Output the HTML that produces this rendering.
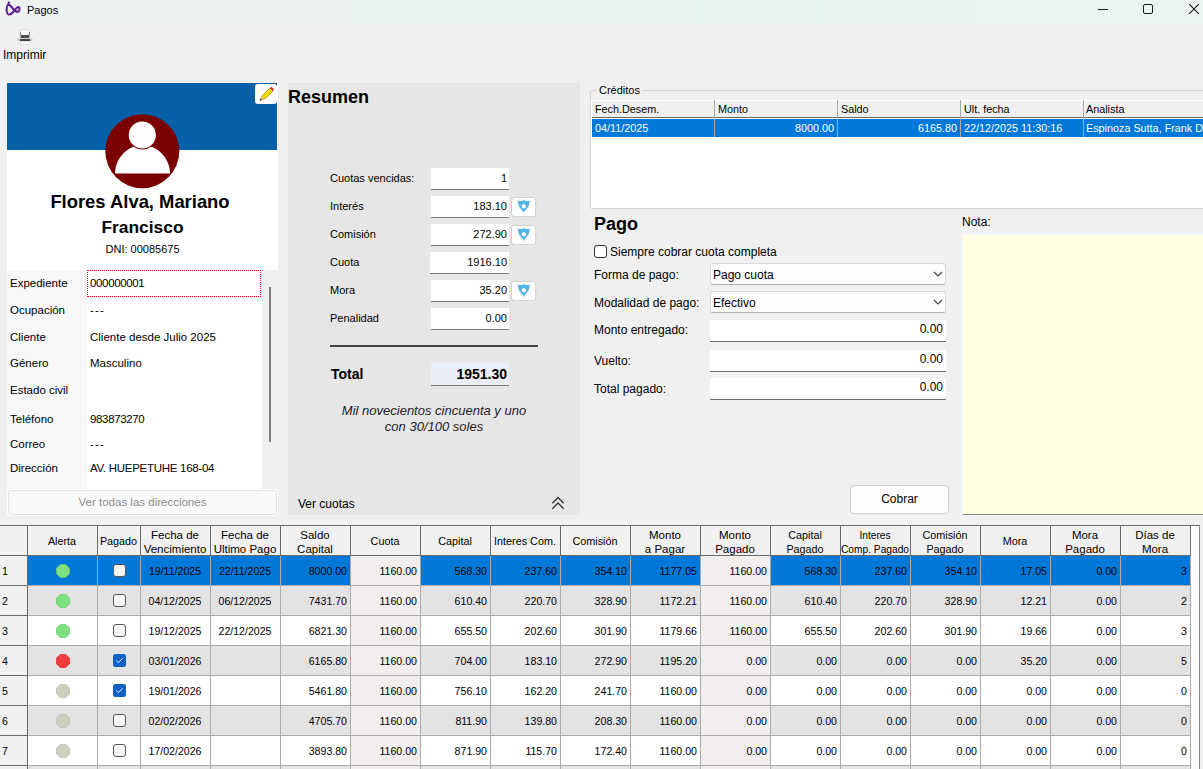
<!DOCTYPE html>
<html><head><meta charset="utf-8">
<style>
*{box-sizing:border-box;margin:0;padding:0}
html,body{width:1203px;height:769px;overflow:hidden;background:#f0f0f0;font-family:"Liberation Sans",sans-serif;color:#000}
.a{position:absolute}
.t{position:absolute;white-space:nowrap;line-height:1}
#title{left:0;top:0;width:1203px;height:25px;background:linear-gradient(90deg,#eef2f1 0%,#eaf3ef 45%,#e8f4ee 62%,#ecf4f2 100%)}
/* left card */
#card{left:7px;top:83px;width:271px;height:187px;background:#fff}
#blue{left:7px;top:83px;width:270px;height:67px;background:#0560a8}
#lblcol{left:7px;top:270px;width:80px;height:219px;background:#f7f7f7}
#lpbg{left:7px;top:270px;width:271px;height:245px;background:#f6f6f6}
#valcol{left:87px;top:270px;width:175px;height:219px;background:#fff}
.lab{font-size:11.5px;color:#000}
/* resumen */
#res{left:288px;top:83px;width:292px;height:432px;background:#e6e6e6}
.rl{font-size:11px;color:#000}
.tb{position:absolute;background:#fff;border-bottom:1px solid #7a7a7a;font-size:11px;text-align:right;padding-right:2px;line-height:20px}
.sh{position:absolute;width:24px;height:21px;background:#fff;border:1px solid #d4d4d4;border-radius:3px}

.cr{font-size:10.8px;color:#000}
.w{color:#fff}
.pl{font-size:12px;color:#000}
.cb{position:absolute;width:236px;height:22px;background:#fdfdfd;border:1px solid #d9d9d9;border-bottom-color:#b0b0b0;border-radius:3px}
.ptb{position:absolute;width:236px;height:22px;background:#fff;border-bottom:1px solid #6f6f6f;font-size:12px;text-align:right;padding-right:3px;line-height:19px}
.gc{font-size:10.6px;color:#000}
.gh{font-size:10.8px;color:#000}
</style></head><body>
<div id="title" class="a"></div>
<svg class="a" style="left:0;top:0" width="24" height="20" viewBox="0 0 24 20">
<path d="M8.4 4.2 C6.2 5.8 6 12.2 7.8 14 C9.6 15.6 12 13.4 14 11 C15.8 8.6 17.6 6.4 18.8 7 C20 7.8 19.6 11.2 17.8 11.8 C16.2 12.3 14.2 10.2 12.4 8 C11.2 6.5 10 5 8.4 4.2 Z" fill="none" stroke="#5b2290" stroke-width="2.1" stroke-linejoin="round"/>
<circle cx="8.8" cy="2.6" r="1.1" fill="#3b1566"/>
</svg>
<div class="t" style="left:27px;top:5px;font-size:11px">Pagos</div>
<!-- window controls -->
<div class="a" style="left:1098px;top:9px;width:10px;height:1px;background:#1a1a1a"></div>
<div class="a" style="left:1143px;top:4px;width:10px;height:10px;border:1px solid #1a1a1a;border-radius:2px"></div>
<svg class="a" style="left:1189px;top:4px" width="10" height="10" viewBox="0 0 10 10"><path d="M0 0L10 10M10 0L0 10" stroke="#1a1a1a" stroke-width="1.1"/></svg>

<!-- toolbar -->
<svg class="a" style="left:16px;top:29px" width="18" height="17" viewBox="0 0 18 17">
<rect x="4.8" y="0.9" width="8.4" height="5" fill="#fbfbfb" stroke="#d0d0d0" stroke-width="0.6"/>
<rect x="4.2" y="3" width="0.8" height="3" fill="#777"/><rect x="13" y="3" width="0.8" height="3" fill="#777"/>
<rect x="4.6" y="6.2" width="8.8" height="2.6" fill="#3d3d3d"/>
<rect x="1.2" y="9" width="15.4" height="3.2" rx="1.6" fill="#c9c9c9"/>
<rect x="4" y="10.2" width="10" height="1.8" fill="#2e2e2e"/>
<rect x="4.9" y="12.2" width="8.2" height="3.1" fill="#fdfdfd" stroke="#cfcfcf" stroke-width="0.6"/>
</svg>
<div class="t" style="left:3px;top:49px;font-size:12px">Imprimir</div>

<!-- LEFT PANEL -->
<div id="card" class="a"></div>
<div id="blue" class="a"></div>
<div class="a" style="left:255px;top:84px;width:22px;height:20px;background:#fff;border-radius:3px"></div>
<svg class="a" style="left:257px;top:86px" width="18" height="16" viewBox="0 0 18 16">
<path d="M3 14 L5 10 L13 2 L16 5 L8 13 Z" fill="#f0e000" stroke="#8a6d00" stroke-width="0.6"/>
<path d="M13 2 L14.5 0.8 L17 3.5 L16 5 Z" fill="#e8202a"/>
<path d="M3 14 L5 10 L8 13 Z" fill="#e7b98a"/>
<path d="M2.5 15 L3.5 12.5 L5 14 Z" fill="#333"/>
</svg>
<svg class="a" style="left:105px;top:114px" width="75" height="75" viewBox="0 0 75 75">
<circle cx="37.3" cy="37.2" r="37" fill="#7b0000"/>
<path d="M10 59.5 C10 45 22 31 37.5 31 C53 31 65 45 65 59.5 Z" fill="#fff"/>
<circle cx="37.3" cy="21" r="14.5" fill="#7b0000"/>
<circle cx="37.3" cy="21" r="13.6" fill="#fff"/>
</svg>
<div class="t" style="left:7px;width:271px;text-align:center;top:189px;font-size:18.4px;font-weight:bold;line-height:25px"><span style="padding-right:5px">Flores Alva, Mariano</span></div>
<div class="t" style="left:7px;width:271px;text-align:center;top:214.5px;font-size:17.4px;font-weight:bold;line-height:25px">Francisco</div>
<div class="t" style="left:7px;width:271px;text-align:center;top:244px;font-size:11px">DNI: 00085675</div>

<div id="lpbg" class="a"></div>
<div class="a" style="left:262px;top:270px;width:16px;height:219px;background:#efefef"></div>
<div id="lblcol" class="a"></div>
<div id="valcol" class="a"></div>
<div class="a" style="left:87px;top:270px;width:174px;height:27px;border:1px dotted #ff0000"></div>
<div class="a" style="left:269px;top:287px;width:2px;height:155px;background:#808080"></div>

<div class="t lab" style="left:10px;top:278px">Expediente</div>
<div class="t lab" style="left:10px;top:305px">Ocupación</div>
<div class="t lab" style="left:10px;top:332px">Cliente</div>
<div class="t lab" style="left:10px;top:358px">Género</div>
<div class="t lab" style="left:10px;top:385px">Estado civil</div>
<div class="t lab" style="left:10px;top:414px">Teléfono</div>
<div class="t lab" style="left:10px;top:439px">Correo</div>
<div class="t lab" style="left:10px;top:463px">Dirección</div>

<div class="t lab" style="left:90px;top:278px;letter-spacing:-0.35px">000000001</div>
<div class="t lab" style="left:90px;top:305px;letter-spacing:1.2px">---</div>
<div class="t lab" style="left:90px;top:332px">Cliente desde Julio 2025</div>
<div class="t lab" style="left:90px;top:358px">Masculino</div>
<div class="t lab" style="left:90px;top:414px;letter-spacing:-0.35px">983873270</div>
<div class="t lab" style="left:90px;top:439px;letter-spacing:1.2px">---</div>
<div class="t lab" style="left:90px;top:463px;letter-spacing:-0.28px">AV. HUEPETUHE 168-04</div>

<div class="a" style="left:8px;top:490px;width:269px;height:25px;background:#f9f9f9;border:1px solid #e2e2e2;border-radius:3px;box-shadow:0 0 0 1px #fff"></div>
<div class="t" style="left:8px;width:269px;text-align:center;top:497px;font-size:11.5px;color:#8d8d8d">Ver todas las direcciones</div>

<!-- RESUMEN -->
<div id="res" class="a"></div>
<div class="t" style="left:288px;top:88px;font-size:18px;font-weight:bold">Resumen</div>

<div class="t rl" style="left:330px;top:173px">Cuotas vencidas:</div>
<div class="t rl" style="left:330px;top:201px">Interés</div>
<div class="t rl" style="left:330px;top:229px">Comisión</div>
<div class="t rl" style="left:330px;top:257px">Cuota</div>
<div class="t rl" style="left:330px;top:285px">Mora</div>
<div class="t rl" style="left:330px;top:313px">Penalidad</div>

<div class="tb" style="left:431px;top:168px;width:78px;height:22px">1</div>
<div class="tb" style="left:431px;top:196px;width:78px;height:22px">183.10</div>
<div class="tb" style="left:431px;top:224px;width:78px;height:22px">272.90</div>
<div class="tb" style="left:430px;top:252px;width:79px;height:22px">1916.10</div>
<div class="tb" style="left:431px;top:280px;width:78px;height:22px">35.20</div>
<div class="tb" style="left:431px;top:308px;width:78px;height:22px">0.00</div>

<svg class="a" style="left:511px;top:197px" width="26" height="20" viewBox="0 0 26 20"><rect x="0.5" y="0.5" width="24.2" height="19.2" rx="3" fill="#fff" stroke="#cdcdcd"/><g transform="translate(0.8,0)"><path d="M5.5 3.2 L18.5 3.2 C18.5 8.5 15.5 13 12 16.3 C8.5 13 5.5 8.5 5.5 3.2 Z" fill="none" stroke="#bbb" stroke-width="0.6" stroke-dasharray="1 1"/><path d="M6.2 4 L10.8 4 L12 2.8 L13.2 4 L17.8 4 C17.8 8.5 15 12.2 12 15.3 C9 12.2 6.2 8.5 6.2 4 Z" fill="#50b6e8"/><path d="M12 6.8 L14.3 8.5 L13.5 11.2 L10.5 11.2 L9.7 8.5 Z" fill="#fff"/></g></svg>
<svg class="a" style="left:511px;top:225px" width="26" height="20" viewBox="0 0 26 20"><rect x="0.5" y="0.5" width="24.2" height="19.2" rx="3" fill="#fff" stroke="#cdcdcd"/><g transform="translate(0.8,0)"><path d="M5.5 3.2 L18.5 3.2 C18.5 8.5 15.5 13 12 16.3 C8.5 13 5.5 8.5 5.5 3.2 Z" fill="none" stroke="#bbb" stroke-width="0.6" stroke-dasharray="1 1"/><path d="M6.2 4 L10.8 4 L12 2.8 L13.2 4 L17.8 4 C17.8 8.5 15 12.2 12 15.3 C9 12.2 6.2 8.5 6.2 4 Z" fill="#50b6e8"/><path d="M12 6.8 L14.3 8.5 L13.5 11.2 L10.5 11.2 L9.7 8.5 Z" fill="#fff"/></g></svg>
<svg class="a" style="left:511px;top:281px" width="26" height="20" viewBox="0 0 26 20"><rect x="0.5" y="0.5" width="24.2" height="19.2" rx="3" fill="#fff" stroke="#cdcdcd"/><g transform="translate(0.8,0)"><path d="M5.5 3.2 L18.5 3.2 C18.5 8.5 15.5 13 12 16.3 C8.5 13 5.5 8.5 5.5 3.2 Z" fill="none" stroke="#bbb" stroke-width="0.6" stroke-dasharray="1 1"/><path d="M6.2 4 L10.8 4 L12 2.8 L13.2 4 L17.8 4 C17.8 8.5 15 12.2 12 15.3 C9 12.2 6.2 8.5 6.2 4 Z" fill="#50b6e8"/><path d="M12 6.8 L14.3 8.5 L13.5 11.2 L10.5 11.2 L9.7 8.5 Z" fill="#fff"/></g></svg>

<div class="a" style="left:330px;top:345px;width:208px;height:2px;background:#454545"></div>
<div class="t" style="left:331px;top:367px;font-size:14px;font-weight:bold">Total</div>
<div class="tb" style="left:431px;top:363px;width:78px;height:23px;background:#e9eef9;font-size:14px;font-weight:bold;line-height:22px">1951.30</div>

<div class="t" style="left:288px;width:292px;text-align:center;top:403px;font-size:13px;font-style:italic;line-height:16px;color:#222">Mil novecientos cincuenta y uno<br>con 30/100 soles</div>
<div class="t" style="left:298px;top:498px;font-size:12px">Ver cuotas</div>
<svg class="a" style="left:551px;top:496px" width="14" height="14" viewBox="0 0 14 14"><path d="M1.3 7.2 L7 1.5 L12.7 7.2 M1.3 12.7 L7 7 L12.7 12.7" fill="none" stroke="#333" stroke-width="1.3"/></svg>


<!-- CREDITOS -->
<div class="a" style="left:590px;top:90px;width:620px;height:119px;border:1px solid #d6d6d6;border-radius:2px"></div>
<div class="t" style="left:597px;top:85px;padding:0 2px;background:#f0f0f0;font-size:11px">Créditos</div>
<div class="a" style="left:591px;top:100px;width:612px;height:108px;background:#fff"></div>
<div class="a" style="left:592px;top:100px;width:611px;height:18px;background:#f0f0f0;border-top:1px solid #fff;border-bottom:1px solid #6d6d6d"></div>
<div class="a" style="left:714px;top:100px;width:1px;height:37px;background:#a9a9a9"></div>
<div class="a" style="left:837px;top:100px;width:1px;height:37px;background:#a9a9a9"></div>
<div class="a" style="left:960px;top:100px;width:1px;height:37px;background:#a9a9a9"></div>
<div class="a" style="left:1083px;top:100px;width:1px;height:37px;background:#a9a9a9"></div>
<div class="t cr" style="left:595px;top:104px">Fech.Desem.</div>
<div class="t cr" style="left:718px;top:104px">Monto</div>
<div class="t cr" style="left:841px;top:104px">Saldo</div>
<div class="t cr" style="left:964px;top:104px">Ult. fecha</div>
<div class="t cr" style="left:1086px;top:104px">Analista</div>
<div class="a" style="left:592px;top:119px;width:611px;height:18px;background:#0078d7"></div>
<div class="a" style="left:714px;top:119px;width:1px;height:18px;background:#a9a9a9"></div>
<div class="a" style="left:837px;top:119px;width:1px;height:18px;background:#a9a9a9"></div>
<div class="a" style="left:960px;top:119px;width:1px;height:18px;background:#a9a9a9"></div>
<div class="a" style="left:1083px;top:119px;width:1px;height:18px;background:#a9a9a9"></div>
<div class="t cr w" style="left:595px;top:123px">04/11/2025</div>
<div class="t cr w" style="left:714px;width:120px;text-align:right;top:123px">8000.00</div>
<div class="t cr w" style="left:837px;width:120px;text-align:right;top:123px">6165.80</div>
<div class="t cr w" style="left:964px;top:123px">22/12/2025 11:30:16</div>
<div class="t cr w" style="left:1086px;top:123px">Espinoza Sutta, Frank D</div>

<!-- PAGO -->
<div class="t" style="left:594px;top:215px;font-size:18px;font-weight:bold">Pago</div>
<div class="a" style="left:594px;top:245px;width:13px;height:13px;border:1px solid #333;border-radius:3px;background:#fff"></div>
<div class="t pl" style="left:610px;top:246px">Siempre cobrar cuota completa</div>
<div class="t pl" style="left:594px;top:269px">Forma de pago:</div>
<div class="t pl" style="left:594px;top:297px">Modalidad de pago:</div>
<div class="t pl" style="left:594px;top:324px">Monto entregado:</div>
<div class="t pl" style="left:594px;top:355px">Vuelto:</div>
<div class="t pl" style="left:594px;top:383px">Total pagado:</div>
<div class="cb" style="left:710px;top:263px"></div>
<div class="cb" style="left:710px;top:291px"></div>
<div class="t pl" style="left:713px;top:269px">Pago cuota</div>
<div class="t pl" style="left:713px;top:297px">Efectivo</div>
<svg class="a" style="left:933px;top:271px" width="10" height="6" viewBox="0 0 10 6"><path d="M1 1L5 5L9 1" fill="none" stroke="#444" stroke-width="1.1"/></svg>
<svg class="a" style="left:933px;top:299px" width="10" height="6" viewBox="0 0 10 6"><path d="M1 1L5 5L9 1" fill="none" stroke="#444" stroke-width="1.1"/></svg>
<div class="ptb" style="left:710px;top:320px">0.00</div>
<div class="ptb" style="left:710px;top:350px">0.00</div>
<div class="ptb" style="left:710px;top:378px">0.00</div>

<div class="a" style="left:850px;top:485px;width:99px;height:29px;background:#fdfdfd;border:1px solid #d0d0d0;border-radius:4px"></div>
<div class="t pl" style="left:850px;width:99px;text-align:center;top:493px">Cobrar</div>

<!-- NOTA -->
<div class="t pl" style="left:962px;top:216px">Nota:</div>
<div class="a" style="left:962px;top:234px;width:241px;height:281px;background:#fffde2;border-top:1px solid #f7f7f7;border-left:1px solid #f7f7f7;border-bottom:1px solid #8a8a8a"></div>
<!-- GRID -->
<div class="a" style="left:0;top:525px;width:1200px;height:244px;background:#fff;border-top:1px solid #6a6a6a;border-right:1px solid #8a8a8a"></div>
<div class="a" style="left:0;top:526px;width:1190px;height:29px;background:#f0f0f0"></div>
<div class="a" style="left:0;top:555px;width:27px;height:214px;background:#f0f0f0"></div>
<div class="a" style="left:28px;top:556px;width:1162px;height:29px;background:#0078d7"></div>
<div class="a" style="left:351px;top:556px;width:69px;height:29px;background:#f3eeee"></div>
<div class="a" style="left:701px;top:556px;width:69px;height:29px;background:#f3eeee"></div>
<div class="a" style="left:28px;top:585px;width:1162px;height:1px;background:#ababab"></div>
<div class="a" style="left:0;top:585px;width:27px;height:1px;background:#6a6a6a"></div>
<div class="t gc" style="left:2px;top:566px">1</div>
<svg class="a" style="left:56px;top:564px" width="14" height="14" viewBox="0 0 14 14"><path d="M4.3 0.4H9.7L13.6 4.3V9.7L9.7 13.6H4.3L0.4 9.7V4.3Z" fill="#7fe07f" stroke="#6cc86c" stroke-width="0.8"/></svg>
<div class="a" style="left:113px;top:564px;width:13px;height:13px;background:#f7f7f7;border:1px solid #555;border-radius:3px"></div>
<div class="t gc" style="left:140px;width:70px;text-align:center;top:566px">19/11/2025</div>
<div class="t gc" style="left:210px;width:70px;text-align:center;top:566px">22/11/2025</div>
<div class="t gc" style="left:280px;width:67px;text-align:right;top:566px">8000.00</div>
<div class="t gc" style="left:350px;width:67px;text-align:right;top:566px">1160.00</div>
<div class="t gc" style="left:420px;width:67px;text-align:right;top:566px">568.30</div>
<div class="t gc" style="left:490px;width:67px;text-align:right;top:566px">237.60</div>
<div class="t gc" style="left:560px;width:67px;text-align:right;top:566px">354.10</div>
<div class="t gc" style="left:630px;width:67px;text-align:right;top:566px">1177.05</div>
<div class="t gc" style="left:700px;width:67px;text-align:right;top:566px">1160.00</div>
<div class="t gc" style="left:770px;width:67px;text-align:right;top:566px">568.30</div>
<div class="t gc" style="left:840px;width:67px;text-align:right;top:566px">237.60</div>
<div class="t gc" style="left:910px;width:67px;text-align:right;top:566px">354.10</div>
<div class="t gc" style="left:980px;width:67px;text-align:right;top:566px">17.05</div>
<div class="t gc" style="left:1050px;width:67px;text-align:right;top:566px">0.00</div>
<div class="t gc" style="left:1120px;width:67px;text-align:right;top:566px">3</div>
<div class="a" style="left:28px;top:586px;width:1162px;height:29px;background:#e3e3e3"></div>
<div class="a" style="left:351px;top:586px;width:69px;height:29px;background:#f3eeee"></div>
<div class="a" style="left:701px;top:586px;width:69px;height:29px;background:#f3eeee"></div>
<div class="a" style="left:28px;top:615px;width:1162px;height:1px;background:#ababab"></div>
<div class="a" style="left:0;top:615px;width:27px;height:1px;background:#6a6a6a"></div>
<div class="t gc" style="left:2px;top:596px">2</div>
<svg class="a" style="left:56px;top:594px" width="14" height="14" viewBox="0 0 14 14"><path d="M4.3 0.4H9.7L13.6 4.3V9.7L9.7 13.6H4.3L0.4 9.7V4.3Z" fill="#7fe07f" stroke="#6cc86c" stroke-width="0.8"/></svg>
<div class="a" style="left:113px;top:594px;width:13px;height:13px;background:#f7f7f7;border:1px solid #555;border-radius:3px"></div>
<div class="t gc" style="left:140px;width:70px;text-align:center;top:596px">04/12/2025</div>
<div class="t gc" style="left:210px;width:70px;text-align:center;top:596px">06/12/2025</div>
<div class="t gc" style="left:280px;width:67px;text-align:right;top:596px">7431.70</div>
<div class="t gc" style="left:350px;width:67px;text-align:right;top:596px">1160.00</div>
<div class="t gc" style="left:420px;width:67px;text-align:right;top:596px">610.40</div>
<div class="t gc" style="left:490px;width:67px;text-align:right;top:596px">220.70</div>
<div class="t gc" style="left:560px;width:67px;text-align:right;top:596px">328.90</div>
<div class="t gc" style="left:630px;width:67px;text-align:right;top:596px">1172.21</div>
<div class="t gc" style="left:700px;width:67px;text-align:right;top:596px">1160.00</div>
<div class="t gc" style="left:770px;width:67px;text-align:right;top:596px">610.40</div>
<div class="t gc" style="left:840px;width:67px;text-align:right;top:596px">220.70</div>
<div class="t gc" style="left:910px;width:67px;text-align:right;top:596px">328.90</div>
<div class="t gc" style="left:980px;width:67px;text-align:right;top:596px">12.21</div>
<div class="t gc" style="left:1050px;width:67px;text-align:right;top:596px">0.00</div>
<div class="t gc" style="left:1120px;width:67px;text-align:right;top:596px">2</div>
<div class="a" style="left:28px;top:616px;width:1162px;height:29px;background:#ffffff"></div>
<div class="a" style="left:351px;top:616px;width:69px;height:29px;background:#f3eeee"></div>
<div class="a" style="left:701px;top:616px;width:69px;height:29px;background:#f3eeee"></div>
<div class="a" style="left:28px;top:645px;width:1162px;height:1px;background:#ababab"></div>
<div class="a" style="left:0;top:645px;width:27px;height:1px;background:#6a6a6a"></div>
<div class="t gc" style="left:2px;top:626px">3</div>
<svg class="a" style="left:56px;top:624px" width="14" height="14" viewBox="0 0 14 14"><path d="M4.3 0.4H9.7L13.6 4.3V9.7L9.7 13.6H4.3L0.4 9.7V4.3Z" fill="#7fe07f" stroke="#6cc86c" stroke-width="0.8"/></svg>
<div class="a" style="left:113px;top:624px;width:13px;height:13px;background:#f7f7f7;border:1px solid #555;border-radius:3px"></div>
<div class="t gc" style="left:140px;width:70px;text-align:center;top:626px">19/12/2025</div>
<div class="t gc" style="left:210px;width:70px;text-align:center;top:626px">22/12/2025</div>
<div class="t gc" style="left:280px;width:67px;text-align:right;top:626px">6821.30</div>
<div class="t gc" style="left:350px;width:67px;text-align:right;top:626px">1160.00</div>
<div class="t gc" style="left:420px;width:67px;text-align:right;top:626px">655.50</div>
<div class="t gc" style="left:490px;width:67px;text-align:right;top:626px">202.60</div>
<div class="t gc" style="left:560px;width:67px;text-align:right;top:626px">301.90</div>
<div class="t gc" style="left:630px;width:67px;text-align:right;top:626px">1179.66</div>
<div class="t gc" style="left:700px;width:67px;text-align:right;top:626px">1160.00</div>
<div class="t gc" style="left:770px;width:67px;text-align:right;top:626px">655.50</div>
<div class="t gc" style="left:840px;width:67px;text-align:right;top:626px">202.60</div>
<div class="t gc" style="left:910px;width:67px;text-align:right;top:626px">301.90</div>
<div class="t gc" style="left:980px;width:67px;text-align:right;top:626px">19.66</div>
<div class="t gc" style="left:1050px;width:67px;text-align:right;top:626px">0.00</div>
<div class="t gc" style="left:1120px;width:67px;text-align:right;top:626px">3</div>
<div class="a" style="left:28px;top:646px;width:1162px;height:29px;background:#e3e3e3"></div>
<div class="a" style="left:351px;top:646px;width:69px;height:29px;background:#f3eeee"></div>
<div class="a" style="left:701px;top:646px;width:69px;height:29px;background:#f3eeee"></div>
<div class="a" style="left:28px;top:675px;width:1162px;height:1px;background:#ababab"></div>
<div class="a" style="left:0;top:675px;width:27px;height:1px;background:#6a6a6a"></div>
<div class="t gc" style="left:2px;top:656px">4</div>
<svg class="a" style="left:56px;top:654px" width="14" height="14" viewBox="0 0 14 14"><path d="M4.3 0.4H9.7L13.6 4.3V9.7L9.7 13.6H4.3L0.4 9.7V4.3Z" fill="#f03c3c" stroke="#d82828" stroke-width="0.8"/></svg>
<svg class="a" style="left:113px;top:654px" width="13" height="13" viewBox="0 0 13 13"><rect x="0" y="0" width="13" height="13" rx="2.5" fill="#0f62c4"/><path d="M3.3 6.6L5.4 8.6L9.6 4.4" fill="none" stroke="#fff" stroke-width="0.9"/></svg>
<div class="t gc" style="left:140px;width:70px;text-align:center;top:656px">03/01/2026</div>
<div class="t gc" style="left:280px;width:67px;text-align:right;top:656px">6165.80</div>
<div class="t gc" style="left:350px;width:67px;text-align:right;top:656px">1160.00</div>
<div class="t gc" style="left:420px;width:67px;text-align:right;top:656px">704.00</div>
<div class="t gc" style="left:490px;width:67px;text-align:right;top:656px">183.10</div>
<div class="t gc" style="left:560px;width:67px;text-align:right;top:656px">272.90</div>
<div class="t gc" style="left:630px;width:67px;text-align:right;top:656px">1195.20</div>
<div class="t gc" style="left:700px;width:67px;text-align:right;top:656px">0.00</div>
<div class="t gc" style="left:770px;width:67px;text-align:right;top:656px">0.00</div>
<div class="t gc" style="left:840px;width:67px;text-align:right;top:656px">0.00</div>
<div class="t gc" style="left:910px;width:67px;text-align:right;top:656px">0.00</div>
<div class="t gc" style="left:980px;width:67px;text-align:right;top:656px">35.20</div>
<div class="t gc" style="left:1050px;width:67px;text-align:right;top:656px">0.00</div>
<div class="t gc" style="left:1120px;width:67px;text-align:right;top:656px">5</div>
<div class="a" style="left:28px;top:676px;width:1162px;height:29px;background:#ffffff"></div>
<div class="a" style="left:351px;top:676px;width:69px;height:29px;background:#f3eeee"></div>
<div class="a" style="left:701px;top:676px;width:69px;height:29px;background:#f3eeee"></div>
<div class="a" style="left:28px;top:705px;width:1162px;height:1px;background:#ababab"></div>
<div class="a" style="left:0;top:705px;width:27px;height:1px;background:#6a6a6a"></div>
<div class="t gc" style="left:2px;top:686px">5</div>
<svg class="a" style="left:56px;top:684px" width="14" height="14" viewBox="0 0 14 14"><path d="M4.3 0.4H9.7L13.6 4.3V9.7L9.7 13.6H4.3L0.4 9.7V4.3Z" fill="#cfcfc0" stroke="#b9b9aa" stroke-width="0.8"/></svg>
<svg class="a" style="left:113px;top:684px" width="13" height="13" viewBox="0 0 13 13"><rect x="0" y="0" width="13" height="13" rx="2.5" fill="#0f62c4"/><path d="M3.3 6.6L5.4 8.6L9.6 4.4" fill="none" stroke="#fff" stroke-width="0.9"/></svg>
<div class="t gc" style="left:140px;width:70px;text-align:center;top:686px">19/01/2026</div>
<div class="t gc" style="left:280px;width:67px;text-align:right;top:686px">5461.80</div>
<div class="t gc" style="left:350px;width:67px;text-align:right;top:686px">1160.00</div>
<div class="t gc" style="left:420px;width:67px;text-align:right;top:686px">756.10</div>
<div class="t gc" style="left:490px;width:67px;text-align:right;top:686px">162.20</div>
<div class="t gc" style="left:560px;width:67px;text-align:right;top:686px">241.70</div>
<div class="t gc" style="left:630px;width:67px;text-align:right;top:686px">1160.00</div>
<div class="t gc" style="left:700px;width:67px;text-align:right;top:686px">0.00</div>
<div class="t gc" style="left:770px;width:67px;text-align:right;top:686px">0.00</div>
<div class="t gc" style="left:840px;width:67px;text-align:right;top:686px">0.00</div>
<div class="t gc" style="left:910px;width:67px;text-align:right;top:686px">0.00</div>
<div class="t gc" style="left:980px;width:67px;text-align:right;top:686px">0.00</div>
<div class="t gc" style="left:1050px;width:67px;text-align:right;top:686px">0.00</div>
<div class="t gc" style="left:1120px;width:67px;text-align:right;top:686px">0</div>
<div class="a" style="left:28px;top:706px;width:1162px;height:29px;background:#e3e3e3"></div>
<div class="a" style="left:351px;top:706px;width:69px;height:29px;background:#f3eeee"></div>
<div class="a" style="left:701px;top:706px;width:69px;height:29px;background:#f3eeee"></div>
<div class="a" style="left:28px;top:735px;width:1162px;height:1px;background:#ababab"></div>
<div class="a" style="left:0;top:735px;width:27px;height:1px;background:#6a6a6a"></div>
<div class="t gc" style="left:2px;top:716px">6</div>
<svg class="a" style="left:56px;top:714px" width="14" height="14" viewBox="0 0 14 14"><path d="M4.3 0.4H9.7L13.6 4.3V9.7L9.7 13.6H4.3L0.4 9.7V4.3Z" fill="#cfcfc0" stroke="#b9b9aa" stroke-width="0.8"/></svg>
<div class="a" style="left:113px;top:714px;width:13px;height:13px;background:#f7f7f7;border:1px solid #555;border-radius:3px"></div>
<div class="t gc" style="left:140px;width:70px;text-align:center;top:716px">02/02/2026</div>
<div class="t gc" style="left:280px;width:67px;text-align:right;top:716px">4705.70</div>
<div class="t gc" style="left:350px;width:67px;text-align:right;top:716px">1160.00</div>
<div class="t gc" style="left:420px;width:67px;text-align:right;top:716px">811.90</div>
<div class="t gc" style="left:490px;width:67px;text-align:right;top:716px">139.80</div>
<div class="t gc" style="left:560px;width:67px;text-align:right;top:716px">208.30</div>
<div class="t gc" style="left:630px;width:67px;text-align:right;top:716px">1160.00</div>
<div class="t gc" style="left:700px;width:67px;text-align:right;top:716px">0.00</div>
<div class="t gc" style="left:770px;width:67px;text-align:right;top:716px">0.00</div>
<div class="t gc" style="left:840px;width:67px;text-align:right;top:716px">0.00</div>
<div class="t gc" style="left:910px;width:67px;text-align:right;top:716px">0.00</div>
<div class="t gc" style="left:980px;width:67px;text-align:right;top:716px">0.00</div>
<div class="t gc" style="left:1050px;width:67px;text-align:right;top:716px">0.00</div>
<div class="t gc" style="left:1120px;width:67px;text-align:right;top:716px">0</div>
<div class="a" style="left:28px;top:736px;width:1162px;height:29px;background:#ffffff"></div>
<div class="a" style="left:351px;top:736px;width:69px;height:29px;background:#f3eeee"></div>
<div class="a" style="left:701px;top:736px;width:69px;height:29px;background:#f3eeee"></div>
<div class="a" style="left:28px;top:765px;width:1162px;height:1px;background:#ababab"></div>
<div class="a" style="left:0;top:765px;width:27px;height:1px;background:#6a6a6a"></div>
<div class="t gc" style="left:2px;top:746px">7</div>
<svg class="a" style="left:56px;top:744px" width="14" height="14" viewBox="0 0 14 14"><path d="M4.3 0.4H9.7L13.6 4.3V9.7L9.7 13.6H4.3L0.4 9.7V4.3Z" fill="#cfcfc0" stroke="#b9b9aa" stroke-width="0.8"/></svg>
<div class="a" style="left:113px;top:744px;width:13px;height:13px;background:#f7f7f7;border:1px solid #555;border-radius:3px"></div>
<div class="t gc" style="left:140px;width:70px;text-align:center;top:746px">17/02/2026</div>
<div class="t gc" style="left:280px;width:67px;text-align:right;top:746px">3893.80</div>
<div class="t gc" style="left:350px;width:67px;text-align:right;top:746px">1160.00</div>
<div class="t gc" style="left:420px;width:67px;text-align:right;top:746px">871.90</div>
<div class="t gc" style="left:490px;width:67px;text-align:right;top:746px">115.70</div>
<div class="t gc" style="left:560px;width:67px;text-align:right;top:746px">172.40</div>
<div class="t gc" style="left:630px;width:67px;text-align:right;top:746px">1160.00</div>
<div class="t gc" style="left:700px;width:67px;text-align:right;top:746px">0.00</div>
<div class="t gc" style="left:770px;width:67px;text-align:right;top:746px">0.00</div>
<div class="t gc" style="left:840px;width:67px;text-align:right;top:746px">0.00</div>
<div class="t gc" style="left:910px;width:67px;text-align:right;top:746px">0.00</div>
<div class="t gc" style="left:980px;width:67px;text-align:right;top:746px">0.00</div>
<div class="t gc" style="left:1050px;width:67px;text-align:right;top:746px">0.00</div>
<div class="t gc" style="left:1120px;width:67px;text-align:right;top:746px">0</div>
<div class="a" style="left:28px;top:766px;width:1162px;height:29px;background:#e3e3e3"></div>
<div class="a" style="left:351px;top:766px;width:69px;height:29px;background:#f3eeee"></div>
<div class="a" style="left:701px;top:766px;width:69px;height:29px;background:#f3eeee"></div>
<div class="a" style="left:28px;top:795px;width:1162px;height:1px;background:#ababab"></div>
<div class="a" style="left:0;top:795px;width:27px;height:1px;background:#6a6a6a"></div>
<div class="a" style="left:27px;top:555px;width:1px;height:214px;background:#6a6a6a"></div>
<div class="a" style="left:27px;top:525px;width:1px;height:30px;background:#6a6a6a"></div>
<div class="a" style="left:97px;top:555px;width:1px;height:214px;background:#ababab"></div>
<div class="a" style="left:97px;top:525px;width:1px;height:30px;background:#6a6a6a"></div>
<div class="a" style="left:140px;top:555px;width:1px;height:214px;background:#ababab"></div>
<div class="a" style="left:140px;top:525px;width:1px;height:30px;background:#6a6a6a"></div>
<div class="a" style="left:210px;top:555px;width:1px;height:214px;background:#ababab"></div>
<div class="a" style="left:210px;top:525px;width:1px;height:30px;background:#6a6a6a"></div>
<div class="a" style="left:280px;top:555px;width:1px;height:214px;background:#ababab"></div>
<div class="a" style="left:280px;top:525px;width:1px;height:30px;background:#6a6a6a"></div>
<div class="a" style="left:350px;top:555px;width:1px;height:214px;background:#ababab"></div>
<div class="a" style="left:350px;top:525px;width:1px;height:30px;background:#6a6a6a"></div>
<div class="a" style="left:420px;top:555px;width:1px;height:214px;background:#ababab"></div>
<div class="a" style="left:420px;top:525px;width:1px;height:30px;background:#6a6a6a"></div>
<div class="a" style="left:490px;top:555px;width:1px;height:214px;background:#ababab"></div>
<div class="a" style="left:490px;top:525px;width:1px;height:30px;background:#6a6a6a"></div>
<div class="a" style="left:560px;top:555px;width:1px;height:214px;background:#ababab"></div>
<div class="a" style="left:560px;top:525px;width:1px;height:30px;background:#6a6a6a"></div>
<div class="a" style="left:630px;top:555px;width:1px;height:214px;background:#ababab"></div>
<div class="a" style="left:630px;top:525px;width:1px;height:30px;background:#6a6a6a"></div>
<div class="a" style="left:700px;top:555px;width:1px;height:214px;background:#ababab"></div>
<div class="a" style="left:700px;top:525px;width:1px;height:30px;background:#6a6a6a"></div>
<div class="a" style="left:770px;top:555px;width:1px;height:214px;background:#ababab"></div>
<div class="a" style="left:770px;top:525px;width:1px;height:30px;background:#6a6a6a"></div>
<div class="a" style="left:840px;top:555px;width:1px;height:214px;background:#ababab"></div>
<div class="a" style="left:840px;top:525px;width:1px;height:30px;background:#6a6a6a"></div>
<div class="a" style="left:910px;top:555px;width:1px;height:214px;background:#ababab"></div>
<div class="a" style="left:910px;top:525px;width:1px;height:30px;background:#6a6a6a"></div>
<div class="a" style="left:980px;top:555px;width:1px;height:214px;background:#ababab"></div>
<div class="a" style="left:980px;top:525px;width:1px;height:30px;background:#6a6a6a"></div>
<div class="a" style="left:1050px;top:555px;width:1px;height:214px;background:#ababab"></div>
<div class="a" style="left:1050px;top:525px;width:1px;height:30px;background:#6a6a6a"></div>
<div class="a" style="left:1120px;top:555px;width:1px;height:214px;background:#ababab"></div>
<div class="a" style="left:1120px;top:525px;width:1px;height:30px;background:#6a6a6a"></div>
<div class="a" style="left:1190px;top:555px;width:1px;height:214px;background:#ababab"></div>
<div class="a" style="left:1190px;top:525px;width:1px;height:30px;background:#6a6a6a"></div>
<div class="a" style="left:0;top:555px;width:1190px;height:1px;background:#6a6a6a"></div>
<div class="t gh" style="left:27px;width:70px;text-align:center;top:536px;font-size:10.8px">Alerta</div>
<div class="t gh" style="left:97px;width:43px;text-align:center;top:536px;font-size:10.8px">Pagado</div>
<div class="t gh" style="left:140px;width:70px;text-align:center;top:529px;line-height:13.6px;font-size:11.5px">Fecha de<br>Vencimiento</div>
<div class="t gh" style="left:210px;width:70px;text-align:center;top:529px;line-height:13.6px;font-size:11.5px">Fecha de<br>Ultimo Pago</div>
<div class="t gh" style="left:280px;width:70px;text-align:center;top:529px;line-height:13.6px;font-size:11.5px">Saldo<br>Capital</div>
<div class="t gh" style="left:350px;width:70px;text-align:center;top:536px;font-size:10.8px">Cuota</div>
<div class="t gh" style="left:420px;width:70px;text-align:center;top:536px;font-size:10.8px">Capital</div>
<div class="t gh" style="left:490px;width:70px;text-align:center;top:536px;font-size:10.8px">Interes Com.</div>
<div class="t gh" style="left:560px;width:70px;text-align:center;top:536px;font-size:10.8px">Comisión</div>
<div class="t gh" style="left:630px;width:70px;text-align:center;top:529px;line-height:13.6px;font-size:11.5px">Monto<br>a Pagar</div>
<div class="t gh" style="left:700px;width:70px;text-align:center;top:529px;line-height:13.6px;font-size:11.5px">Monto<br>Pagado</div>
<div class="t gh" style="left:770px;width:70px;text-align:center;top:529px;line-height:13.6px;font-size:10.8px">Capital<br>Pagado</div>
<div class="t gh" style="left:840px;width:70px;text-align:center;top:529px;line-height:13.6px;font-size:10.2px">Interes<br>Comp. Pagado</div>
<div class="t gh" style="left:910px;width:70px;text-align:center;top:529px;line-height:13.6px;font-size:10.8px">Comisión<br>Pagado</div>
<div class="t gh" style="left:980px;width:70px;text-align:center;top:536px;font-size:10.8px">Mora</div>
<div class="t gh" style="left:1050px;width:70px;text-align:center;top:529px;line-height:13.6px;font-size:11.5px">Mora<br>Pagado</div>
<div class="t gh" style="left:1120px;width:70px;text-align:center;top:529px;line-height:13.6px;font-size:11.5px">Días de<br>Mora</div>
<!-- /GRID -->
</body></html>
